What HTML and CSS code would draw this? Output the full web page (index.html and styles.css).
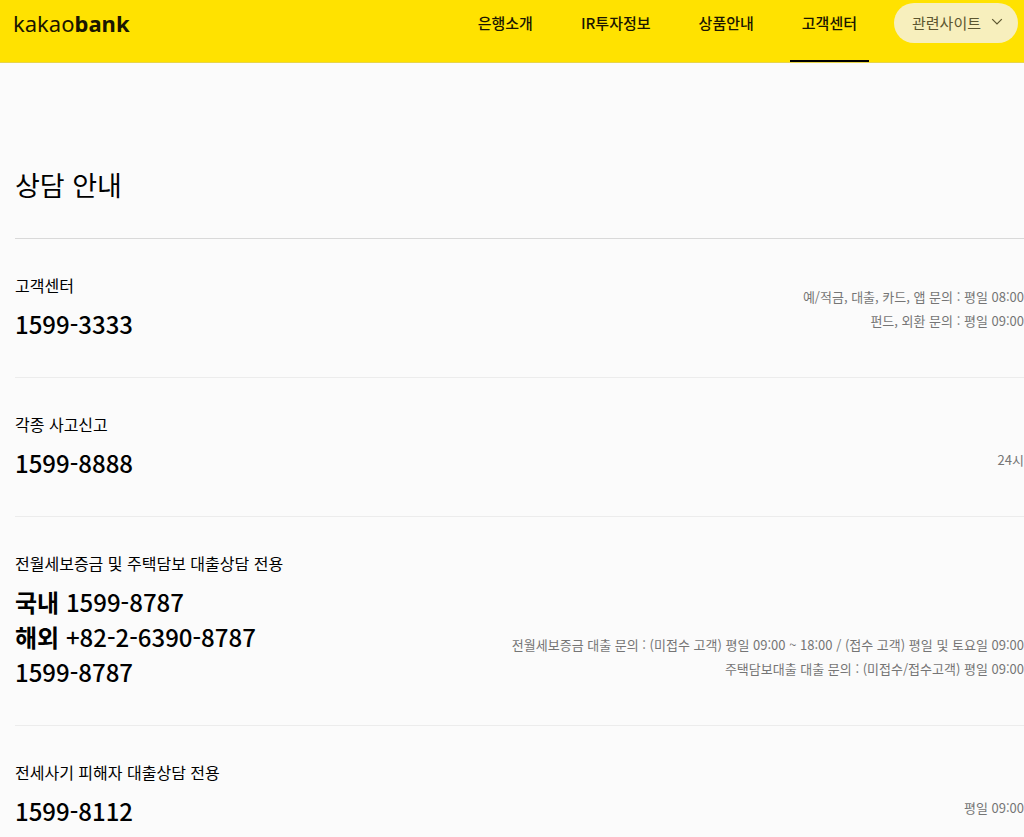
FILE: index.html
```html
<!DOCTYPE html>
<html lang="ko">
<head>
    <meta charset="UTF-8">
    <meta name="viewport" content="width=device-width, initial-scale=1.0">
    <title>상담 안내 - kakaobank</title>
    <link rel="stylesheet" href="styles.css">
</head>
<body>

<header class="header">
    <a href="#" class="logo">kakao<b>bank</b></a>
    <nav class="menu">
        <a href="#">은행소개</a>
        <a href="#">IR투자정보</a>
        <a href="#">상품안내</a>
        <a href="#" class="active">고객센터</a>
    </nav>
    <button type="button" class="site-btn">
        관련사이트
        <svg width="12" height="12" viewBox="0 0 12 12" fill="none" stroke="#5c5630" stroke-width="1.2">
            <path d="M1.2 3.2 L6 8 L10.8 3.2"/>
        </svg>
    </button>
</header>

<main class="content">
    <h1>상담 안내</h1>

    <ul class="contact-list">
        <!-- 고객센터 -->
        <li>
            <div class="contact">
                <h2>고객센터</h2>
                <p class="tel">1599-3333</p>
            </div>
            <div class="hours">
                <p>예/적금, 대출, 카드, 앱 문의 : 평일 08:00</p>
                <p>펀드, 외환 문의 : 평일 09:00</p>
            </div>
        </li>

        <!-- 사고신고 -->
        <li>
            <div class="contact">
                <h2>각종 사고신고</h2>
                <p class="tel">1599-8888</p>
            </div>
            <div class="hours">
                <p>24시</p>
            </div>
        </li>

        <!-- 대출상담 -->
        <li>
            <div class="contact">
                <h2>전월세보증금 및 주택담보 대출상담 전용</h2>
                <p class="tel"><b>국내</b> 1599-8787</p>
                <p class="tel"><b>해외</b> +82-2-6390-8787</p>
                <p class="tel">1599-8787</p>
            </div>
            <div class="hours">
                <p>전월세보증금 대출 문의 : (미접수 고객) 평일 09:00 ~ 18:00 / (접수 고객) 평일 및 토요일 09:00</p>
                <p>주택담보대출 대출 문의 : (미접수/접수고객) 평일 09:00</p>
            </div>
        </li>

        <!-- 전세사기 -->
        <li>
            <div class="contact">
                <h2>전세사기 피해자 대출상담 전용</h2>
                <p class="tel">1599-8112</p>
            </div>
            <div class="hours">
                <p>평일 09:00</p>
            </div>
        </li>
    </ul>
</main>

</body>
</html>
```
FILE: styles.css
```css
* {
    box-sizing: border-box;
}

body {
    margin: 0;
    background-color: #fbfbfb;
    color: #000;
    font-family: "Noto Sans CJK KR", sans-serif;
}

h1, h2, p, ul {
    margin: 0;
    padding: 0;
}

.header {
    display: flex;
    align-items: flex-start;
    height: 63px;
    padding: 0 6px 0 13px;
    background-color: #ffe200;
    border-bottom: 1px solid #e8d54a;
}

.logo {
    margin-right: auto;
    font-family: "Noto Sans", sans-serif;
    font-size: 22px;
    line-height: 46px;
    font-weight: 400;
    color: #1a1600;
    text-decoration: none;
}

.menu {
    display: flex;
    gap: 24px;
}

.menu a {
    height: 62px;
    padding: 0 12px;
    font-size: 15px;
    line-height: 46px;
    font-weight: 500;
    color: #1a1600;
    text-decoration: none;
}

.menu a.active {
    border-bottom: 2px solid #000;
}

.site-btn {
    display: flex;
    align-items: center;
    gap: 10px;
    height: 40px;
    margin: 3px 0 0 25px;
    padding: 0 15px 2px 18px;
    border: none;
    border-radius: 20px;
    background-color: #f7efbd;
    color: #5c5630;
    font-family: inherit;
    font-size: 15px;
    cursor: pointer;
}

.content {
    padding: 101px 0 0 15px;
}

h1 {
    padding-bottom: 32px;
    font-size: 27px;
    line-height: 42px;
    font-weight: 400;
}

.contact-list {
    list-style: none;
    border-top: 1px solid #d9d9d9;
}

.contact-list li {
    display: flex;
    justify-content: space-between;
    align-items: flex-end;
    padding: 34px 0 36px;
    border-bottom: 1px solid #ececec;
}

.contact-list li:last-child {
    padding-bottom: 0;
    border-bottom: none;
}

h2 {
    margin-bottom: 9px;
    font-size: 16px;
    line-height: 24px;
    font-weight: 400;
}

.tel {
    font-size: 24px;
    line-height: 35px;
    font-weight: 500;
}

.hours {
    padding-bottom: 8px;
    font-size: 13px;
    line-height: 24px;
    color: #757575;
    text-align: right;
    white-space: nowrap;
}
```
